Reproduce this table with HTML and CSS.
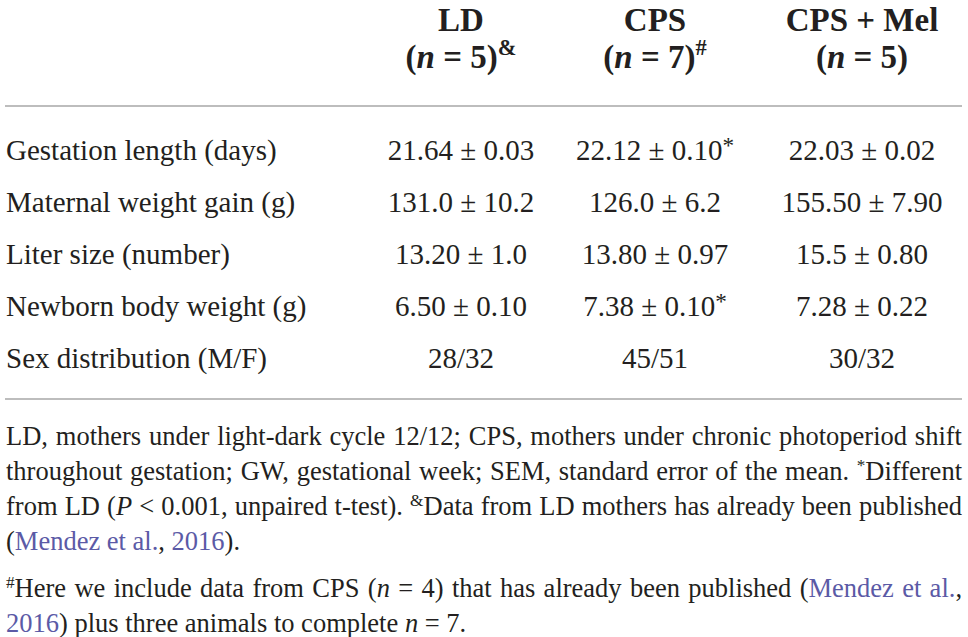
FILE: index.html
```html
<!DOCTYPE html>
<html lang="en">

<head>
    <meta charset="UTF-8">
    <title>Table 1 - Maternal and litter data</title>
    <link rel="stylesheet" href="styles.css">
</head>

<body>
    <div class="table-wrap">
        <table class="data-table">
            <colgroup>
                <col class="col-label">
                <col class="col-ld">
                <col class="col-cps">
                <col class="col-mel">
            </colgroup>
            <thead>
                <tr>
                    <th></th>
                    <th>LD<br>(<i>n</i> = 5)<sup>&amp;</sup></th>
                    <th>CPS<br>(<i>n</i> = 7)<sup>#</sup></th>
                    <th class="mel">CPS + Mel<br>(<i>n</i> = 5)</th>
                </tr>
            </thead>
            <tbody>
                <tr>
                    <td>Gestation length (days)</td>
                    <td>21.64 ± 0.03</td>
                    <td>22.12 ± 0.10<sup>*</sup></td>
                    <td class="mel">22.03 ± 0.02</td>
                </tr>
                <tr>
                    <td>Maternal weight gain (g)</td>
                    <td>131.0 ± 10.2</td>
                    <td>126.0 ± 6.2</td>
                    <td class="mel">155.50 ± 7.90</td>
                </tr>
                <tr>
                    <td>Liter size (number)</td>
                    <td>13.20 ± 1.0</td>
                    <td>13.80 ± 0.97</td>
                    <td class="mel">15.5 ± 0.80</td>
                </tr>
                <tr>
                    <td>Newborn body weight (g)</td>
                    <td>6.50 ± 0.10</td>
                    <td>7.38 ± 0.10<sup>*</sup></td>
                    <td class="mel">7.28 ± 0.22</td>
                </tr>
                <tr>
                    <td>Sex distribution (M/F)</td>
                    <td>28/32</td>
                    <td>45/51</td>
                    <td class="mel">30/32</td>
                </tr>
            </tbody>
        </table>

        <div class="notes">
            <p>
                <span class="ln">LD, mothers under light-dark cycle 12/12; CPS, mothers under chronic photoperiod shift</span>
                <span class="ln">throughout gestation; GW, gestational week; SEM, standard error of the mean. <sup>*</sup>Different</span>
                <span class="ln">from LD (<i>P</i> &lt; 0.001, unpaired t-test). <sup>&amp;</sup>Data from LD mothers has already been published</span>
                (<a href="#">Mendez et al.</a>, <a href="#">2016</a>).
            </p>
            <p>
                <span class="ln"><sup>#</sup>Here we include data from CPS (<i>n</i> = 4) that has already been published (<a href="#">Mendez et al.</a>,</span>
                <a href="#">2016</a>) plus three animals to complete <i>n</i> = 7.
            </p>
        </div>
    </div>
</body>

</html>
```

FILE: styles.css
```css
body {
    margin: 0;
    background: #fff;
    color: #231f20;
    font-family: "Liberation Serif", "Times New Roman", serif;
}

.table-wrap {
    width: 957px;
    padding-left: 5px;
}

.data-table {
    width: 957px;
    table-layout: fixed;
    border-collapse: collapse;
}

.col-label {
    width: 355px;
}

.col-ld {
    width: 202px;
}

.col-cps {
    width: 186px;
}

.col-mel {
    width: 214px;
}

.data-table th {
    font-size: 33px;
    line-height: 37px;
    font-weight: bold;
    text-align: center;
    padding: 2px 0 29px;
    border-bottom: 2px solid #bdbdbd;
}

.data-table th sup {
    font-size: 0.68em;
    vertical-align: 0.6em;
}

.data-table td {
    font-size: 29px;
    line-height: 52px;
    text-align: center;
    padding: 0;
    white-space: nowrap;
}

.data-table td sup {
    font-size: 0.8em;
    vertical-align: 0.3em;
}

.data-table td:first-child {
    text-align: left;
    padding-left: 1px;
}

.data-table tbody tr:first-child td {
    padding-top: 17px;
}

.data-table tbody tr:last-child td {
    padding-bottom: 14px;
    border-bottom: 2px solid #bdbdbd;
}

.data-table .mel {
    padding-left: 14px;
}

sup {
    font-size: 0.65em;
    line-height: 0;
    vertical-align: 0.5em;
}

.notes {
    padding: 19px 0 0 1px;
    font-size: 26.5px;
    line-height: 35px;
}

.notes p {
    margin: 0 0 12px;
}

/* forced lines, spread edge to edge like the printed caption */
.notes .ln {
    display: block;
    text-align: justify;
    text-align-last: justify;
}

.notes a {
    color: #5b5aa6;
    text-decoration: none;
}
```
